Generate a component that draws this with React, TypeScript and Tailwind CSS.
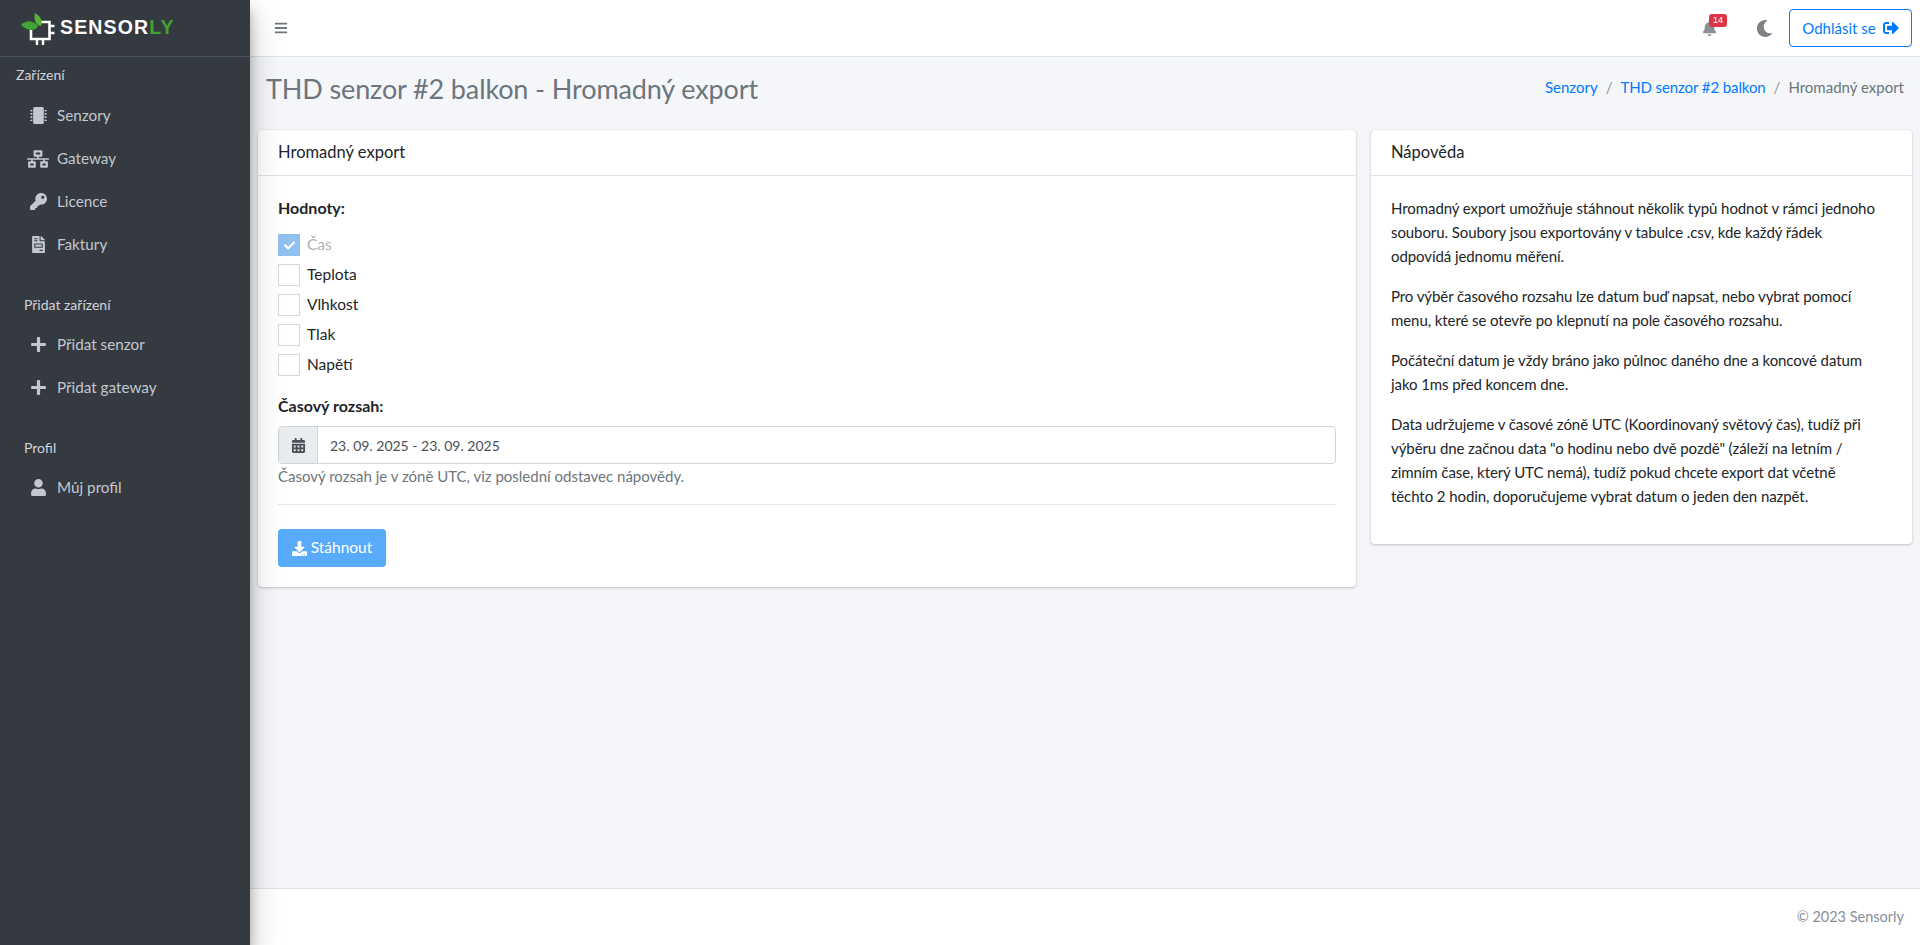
import React from "react";
import { FaMicrochip, FaNetworkWired, FaKey, FaFileInvoice, FaPlus, FaUser, FaBars, FaBell, FaMoon, FaSignOutAlt, FaCalendarAlt, FaDownload, FaCheck } from "react-icons/fa";

function Logo() {
  return (
    <div className="flex items-center h-[56px]">
      <svg width="60" height="50" viewBox="0 0 60 50" className="shrink-0">
        <path d="M31 27 V36 H49.5 V19 H41" fill="none" stroke="#fff" strokeWidth="2.6" />
        <path d="M50 23 H54.5 M50 30 H54.5 M37 37 V42 M43 37 V42" stroke="#fff" strokeWidth="2.4" />
        <path d="M21 22 C26 17 33 17 38 23 C36 28 28 29 21 22 Z" fill="#3fa535" />
        <path d="M35 10 C40 13 43 17 41 23 C37 23 33 18 35 10 Z" fill="#57b33a" />
      </svg>
      <span className="font-['Liberation_Sans',sans-serif] font-bold text-[19.5px] tracking-[1.15px] text-white leading-none">SENSOR<span className="text-[#43a32f]">LY</span></span>
    </div>
  );
}

function NavItem({ icon, label }: { icon: React.ReactNode; label: string }) {
  return (
    <div className="flex items-center h-[43px] pl-[27px] text-[#c2c7d0]">
      <span className="w-[22px] flex justify-center items-center text-[17px] mr-[8px]">{icon}</span>
      <span className="text-[15.25px]">{label}</span>
    </div>
  );
}

function Check({ label, checked }: { label: string; checked?: boolean }) {
  return (
    <div className="flex items-center h-[30px]">
      {checked ? (
        <span className="w-[22px] h-[22px] bg-[#8fc0ef] flex items-center justify-center text-white text-[11px]"><FaCheck /></span>
      ) : (
        <span className="w-[22px] h-[22px] bg-white border border-[#d3d6da]" />
      )}
      <span className={"ml-[7px] text-[15.5px] " + (checked ? "text-[#adb0b3]" : "text-[#212529]")}>{label}</span>
    </div>
  );
}

export default function App() {
  return (
    <div className="flex h-[945px] w-[1920px] overflow-hidden bg-[#f4f6f9] font-['Lato','Noto_Sans',sans-serif] text-[#212529] text-[15px]">
      <aside className="w-[250px] shrink-0 bg-[#343a40] shadow-[0_14px_28px_rgba(0,0,0,0.25),0_10px_10px_rgba(0,0,0,0.22)] z-10">
        <div className="border-b border-[#4b545c] h-[57px]"><Logo /></div>
        <div className="pt-[5px]">
          <div className="pl-[16px] h-[24px] text-[14px] text-[#d0d4db] flex items-center">Zařízení</div>
          <div className="mt-[8px]">
            <NavItem icon={<FaMicrochip />} label="Senzory" />
            <NavItem icon={<FaNetworkWired className="text-[22px]" />} label="Gateway" />
            <NavItem icon={<FaKey />} label="Licence" />
            <NavItem icon={<FaFileInvoice />} label="Faktury" />
          </div>
          <div className="pl-[24px] mt-[26px] h-[24px] text-[14px] text-[#d0d4db] flex items-center">Přidat zařízení</div>
          <div className="mt-[7px]">
            <NavItem icon={<FaPlus />} label="Přidat senzor" />
            <NavItem icon={<FaPlus />} label="Přidat gateway" />
          </div>
          <div className="pl-[24px] mt-[26px] h-[24px] text-[14px] text-[#d0d4db] flex items-center">Profil</div>
          <div className="mt-[7px]">
            <NavItem icon={<FaUser />} label="Můj profil" />
          </div>
        </div>
      </aside>
      <div className="flex-1 flex flex-col min-w-0">
        <header className="h-[57px] shrink-0 bg-white border-b border-[#dee2e6] flex items-center pl-[24px] pr-[8px]">
          <FaBars className="text-[#6f767c] text-[14px]" />
          <div className="flex-1" />
          <div className="relative mr-[39px] text-[#8b9095] text-[15px]">
            <FaBell />
            <span className="absolute -top-[7px] left-[7px] bg-[#dc3545] text-white text-[9px] leading-none rounded-[3px] px-[4px] py-[2px] font-['Liberation_Sans',sans-serif]">14</span>
          </div>
          <FaMoon className="text-[#7d8287] text-[17px] mr-[16px]" />
          <div className="h-[38px] w-[123px] border border-[#007bff] rounded-[4px] flex items-center justify-center text-[#007bff] text-[15px]">
            Odhlásit se<FaSignOutAlt className="ml-[7px] text-[16px]" />
          </div>
        </header>
        <main className="flex-1 min-h-0 flex flex-col">
          <div className="flex items-center justify-between h-[73px] pl-[16px] pr-[16px] pb-[9px]">
            <h1 className="text-[27px] tracking-[-0.13px] text-[#6c757d] font-normal">THD senzor #2 balkon - Hromadný export</h1>
            <div className="text-[15px] text-[#6c757d] flex gap-[8px] pb-[4px]">
              <span className="text-[#007bff]">Senzory</span><span className="text-[#8d959c]">/</span>
              <span className="text-[#007bff] tracking-[-0.1px]">THD senzor #2 balkon</span><span className="text-[#8d959c]">/</span>
              <span>Hromadný export</span>
            </div>
          </div>
          <div className="flex items-start gap-[15px] pl-[8px] pr-[8px]">
            <section className="w-[1098px] bg-white rounded-[4px] shadow-[0_0_1px_rgba(0,0,0,0.13),0_1px_3px_rgba(0,0,0,0.2)]">
              <div className="h-[46px] border-b border-[#dfe1e4] flex items-center px-[20px] text-[16.5px] pb-[1px]">Hromadný export</div>
              <div className="px-[20px] pt-[20px] pb-[20px]">
                <div className="font-bold text-[16px] h-[24px] flex items-center">Hodnoty:</div>
                <div className="mt-[10px]">
                  <Check label="Čas" checked />
                  <Check label="Teplota" />
                  <Check label="Vlhkost" />
                  <Check label="Tlak" />
                  <Check label="Napětí" />
                </div>
                <div className="font-bold text-[16px] h-[24px] flex items-center mt-[14px]">Časový rozsah:</div>
                <div className="mt-[8px] flex h-[38px] border border-[#ced4da] rounded-[4px] overflow-hidden">
                  <div className="w-[39px] bg-[#e9ecef] border-r border-[#ced4da] flex items-center justify-center text-[#495057] text-[15px]"><FaCalendarAlt /></div>
                  <div className="flex-1 flex items-center pl-[12px] text-[#495057] text-[14px]">23. 09. 2025 - 23. 09. 2025</div>
                </div>
                <div className="text-[#6c757d] text-[15px] h-[24px] flex items-center">Časový rozsah je v zóně UTC, viz poslední odstavec nápovědy.</div>
                <div className="border-t border-[#e3e5e8] mt-[16px] mb-[24px]" />
                <div className="w-[108px] h-[38px] bg-[#58aafb] rounded-[4px] text-white text-[15.5px] flex items-center justify-center"><FaDownload className="mr-[4px] text-[15px]" />Stáhnout</div>
              </div>
            </section>
            <section className="w-[541px] bg-white rounded-[4px] shadow-[0_0_1px_rgba(0,0,0,0.13),0_1px_3px_rgba(0,0,0,0.2)]">
              <div className="h-[46px] border-b border-[#dfe1e4] flex items-center px-[20px] text-[16.5px] pb-[1px]">Nápověda</div>
              <div className="px-[20px] pt-[20px] pb-[20px] text-[15px] tracking-[-0.08px] leading-[24px]">
                <p className="mb-[16px]">Hromadný export umožňuje stáhnout několik typů hodnot v rámci jednoho<br />souboru. Soubory jsou exportovány v tabulce .csv, kde každý řádek<br />odpovídá jednomu měření.</p>
                <p className="mb-[16px]">Pro výběr časového rozsahu lze datum buď napsat, nebo vybrat pomocí<br />menu, které se otevře po klepnutí na pole časového rozsahu.</p>
                <p className="mb-[16px]">Počáteční datum je vždy bráno jako půlnoc daného dne a koncové datum<br />jako 1ms před koncem dne.</p>
                <p className="mb-[16px]">Data udržujeme v časové zóně UTC (Koordinovaný světový čas), tudíž při<br />výběru dne začnou data "o hodinu nebo dvě pozdě" (záleží na letním /<br />zimním čase, který UTC nemá), tudíž pokud chcete export dat včetně<br />těchto 2 hodin, doporučujeme vybrat datum o jeden den nazpět.</p>
              </div>
            </section>
          </div>
          <div className="flex-1" />
          <footer className="h-[57px] shrink-0 bg-white border-t border-[#dee2e6] flex items-center justify-end pr-[16px] text-[14.5px] text-[#869099]">© 2023 Sensorly</footer>
        </main>
      </div>
    </div>
  );
}
